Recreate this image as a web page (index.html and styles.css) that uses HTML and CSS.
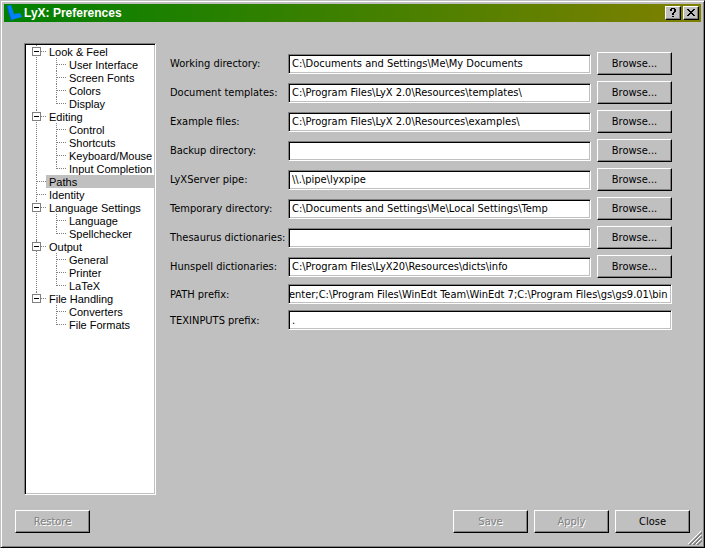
FILE: index.html
```
<!DOCTYPE html>
<html lang="en">
<head>
    <meta charset="UTF-8">
    <meta name="viewport" content="width=device-width, initial-scale=1.0">
    <title>LyX: Preferences</title>
    <link rel="stylesheet" href="styles.css">
</head>
<body>
    <div class="window">
        <header class="title-bar">
            <svg class="logo" width="16" height="16" viewBox="0 0 16 16">
                <path d="M1 1L5 0L8 9L14 8L16 12L5 15Z" fill="#0080ff"/>
                <path d="M1 1L5 15L7 15" fill="none" stroke="#0060c0"/>
            </svg>
            <h1>LyX: Preferences</h1>
            <button type="button" class="title-button" aria-label="Help">
                <svg width="10" height="10" viewBox="0 0 10 10" shape-rendering="crispEdges">
                    <path d="M2 1h2v2h-2zM3 0h4v1h-4zM6 1h2v3h-2zM5 4h2v1h-2zM4 5h2v2h-2zM4 8h2v1h-2z"/>
                </svg>
            </button>
            <button type="button" class="title-button" aria-label="Close window">
                <svg width="10" height="10" viewBox="0 0 10 10" shape-rendering="crispEdges">
                    <path d="M1 1h2v1h-2zM7 1h2v1h-2zM2 2h2v1h-2zM6 2h2v1h-2zM3 3h4v1h-4zM4 4h2v1h-2zM3 5h4v1h-4zM2 6h2v1h-2zM6 6h2v1h-2zM1 7h2v1h-2zM7 7h2v1h-2z"/>
                </svg>
            </button>
        </header>

        <main class="content">
            <!-- Category tree -->
            <nav class="tree-box">
                <ul class="tree">
                    <li>
                        <button type="button" class="toggle" aria-label="Collapse Look &amp; Feel"></button>
                        <span class="item">Look &amp; Feel</span>
                        <ul>
                            <li><span class="item">User Interface</span></li>
                            <li><span class="item">Screen Fonts</span></li>
                            <li><span class="item">Colors</span></li>
                            <li><span class="item">Display</span></li>
                        </ul>
                    </li>
                    <li>
                        <button type="button" class="toggle" aria-label="Collapse Editing"></button>
                        <span class="item">Editing</span>
                        <ul>
                            <li><span class="item">Control</span></li>
                            <li><span class="item">Shortcuts</span></li>
                            <li><span class="item">Keyboard/Mouse</span></li>
                            <li><span class="item">Input Completion</span></li>
                        </ul>
                    </li>
                    <li><span class="item selected">Paths</span></li>
                    <li><span class="item">Identity</span></li>
                    <li>
                        <button type="button" class="toggle" aria-label="Collapse Language Settings"></button>
                        <span class="item">Language Settings</span>
                        <ul>
                            <li><span class="item">Language</span></li>
                            <li><span class="item">Spellchecker</span></li>
                        </ul>
                    </li>
                    <li>
                        <button type="button" class="toggle" aria-label="Collapse Output"></button>
                        <span class="item">Output</span>
                        <ul>
                            <li><span class="item">General</span></li>
                            <li><span class="item">Printer</span></li>
                            <li><span class="item">LaTeX</span></li>
                        </ul>
                    </li>
                    <li>
                        <button type="button" class="toggle" aria-label="Collapse File Handling"></button>
                        <span class="item">File Handling</span>
                        <ul>
                            <li><span class="item">Converters</span></li>
                            <li><span class="item">File Formats</span></li>
                        </ul>
                    </li>
                </ul>
            </nav>

            <!-- Paths page -->
            <form class="paths" id="pathsForm">
                <label for="working-dir">Working directory:</label>
                <input type="text" id="working-dir" value="C:\Documents and Settings\Me\My Documents">
                <button type="button">Browse...</button>

                <label for="templates">Document templates:</label>
                <input type="text" id="templates" value="C:\Program Files\LyX 2.0\Resources\templates\">
                <button type="button">Browse...</button>

                <label for="examples">Example files:</label>
                <input type="text" id="examples" value="C:\Program Files\LyX 2.0\Resources\examples\">
                <button type="button">Browse...</button>

                <label for="backup">Backup directory:</label>
                <input type="text" id="backup">
                <button type="button">Browse...</button>

                <label for="pipe">LyXServer pipe:</label>
                <input type="text" id="pipe" value="\\.\pipe\lyxpipe">
                <button type="button">Browse...</button>

                <label for="temp">Temporary directory:</label>
                <input type="text" id="temp" value="C:\Documents and Settings\Me\Local Settings\Temp">
                <button type="button">Browse...</button>

                <label for="thesaurus">Thesaurus dictionaries:</label>
                <input type="text" id="thesaurus">
                <button type="button">Browse...</button>

                <label for="hunspell">Hunspell dictionaries:</label>
                <input type="text" id="hunspell" value="C:\Program Files\LyX20\Resources\dicts\info">
                <button type="button">Browse...</button>

                <label for="path-prefix">PATH prefix:</label>
                <input type="text" id="path-prefix" class="wide scrolled" value="Center;C:\Program Files\WinEdt Team\WinEdt 7;C:\Program Files\gs\gs9.01\bin">

                <label for="texinputs">TEXINPUTS prefix:</label>
                <input type="text" id="texinputs" class="wide" value=".">
            </form>
        </main>

        <footer class="buttons">
            <button type="button" class="restore" disabled>Restore</button>
            <button type="button" disabled>Save</button>
            <button type="button" disabled>Apply</button>
            <button type="button">Close</button>
        </footer>

        <svg class="grip" width="14" height="14" viewBox="0 0 14 14">
            <path d="M0 13L13 0M4 13L13 4M8 13L13 8" stroke="#ffffff"/>
            <path d="M1 14L14 1M2 14L14 2M5 14L14 5M6 14L14 6M9 14L14 9M10 14L14 10" stroke="#808080"/>
        </svg>
    </div>

    <script>
        const pathPrefix = document.getElementById('path-prefix');
        pathPrefix.scrollLeft = pathPrefix.scrollWidth;
    </script>
</body>
</html>
```
FILE: styles.css
```
:root {
    --face: #c0c0c0;
    --shadow: #808080;
    --dark: #000000;
    --light: #ffffff;
}

* {
    box-sizing: border-box;
}

body {
    margin: 0;
    font-family: "DejaVu Sans Condensed", Tahoma, sans-serif;
    font-size: 11px;
    line-height: 13px;
    color: #000000;
    background: var(--face);
}

.window {
    position: relative;
    display: flex;
    flex-direction: column;
    min-height: 100vh;
    padding: 3px;
    border: 1px solid;
    border-color: var(--face) var(--dark) var(--dark) var(--face);
    box-shadow: inset 1px 1px var(--light), inset -1px -1px var(--shadow);
}

/* Title bar */
.title-bar {
    display: flex;
    align-items: center;
    gap: 2px;
    height: 18px;
    padding: 0 2px;
    background: linear-gradient(to right, #008000, #808000);
}

.logo {
    flex: none;
}

h1 {
    flex: 1;
    margin: 0;
    font-family: "Liberation Sans", Arial, sans-serif;
    font-size: 12px;
    line-height: 16px;
    font-weight: bold;
    color: #ffffff;
}

/* Buttons */
button {
    width: 75px;
    height: 23px;
    padding: 0;
    font: inherit;
    color: #000000;
    background: var(--face);
    border: 1px solid;
    border-color: var(--light) var(--dark) var(--dark) var(--light);
    box-shadow: inset -1px -1px var(--shadow);
}

button:disabled {
    color: var(--shadow);
    text-shadow: 1px 1px var(--light);
}

.title-button {
    display: flex;
    justify-content: center;
    align-items: center;
    width: 16px;
    height: 14px;
}

/* Content */
.content {
    flex: 1;
    display: flex;
    gap: 14px;
    padding: 21px 29px 0 20px;
}

/* Tree */
.tree-box {
    flex: none;
    width: 132px;
    background: #ffffff;
    border: 1px solid;
    border-color: var(--shadow) var(--light) var(--light) var(--shadow);
    box-shadow: inset 1px 1px var(--dark), inset -1px -1px var(--face);
    padding: 1px;
    font-family: "Liberation Sans", Arial, sans-serif;
}

.tree,
.tree ul {
    margin: 0;
    padding: 0;
    list-style: none;
}

.tree li {
    position: relative;
    padding-left: 20px;
}

.item {
    display: block;
    padding: 1px 0 0 3px;
    line-height: 12px;
    white-space: nowrap;
}

.selected {
    background: var(--face);
}

/* Dotted connectors */
.tree li::before {
    content: "";
    position: absolute;
    top: 0;
    bottom: 0;
    left: 10px;
    border-left: 1px dotted var(--shadow);
}

.tree li:last-child::before {
    bottom: auto;
    height: 7px;
}

.tree li::after {
    content: "";
    position: absolute;
    top: 6px;
    left: 10px;
    width: 10px;
    border-top: 1px dotted var(--shadow);
}

.toggle {
    position: absolute;
    z-index: 1;
    top: 2px;
    left: 6px;
    width: 9px;
    height: 9px;
    border: 1px solid var(--shadow);
    box-shadow: none;
    background: linear-gradient(#000000, #000000) center / 5px 1px no-repeat #ffffff;
}

/* Form */
.paths {
    flex: 1;
    display: grid;
    grid-template-columns: 112px 1fr 75px;
    align-content: start;
    align-items: center;
    gap: 6px;
    padding-top: 9px;
}

label {
    white-space: nowrap;
}

input {
    width: 100%;
    min-width: 0;
    height: 20px;
    padding: 0 3px;
    font: inherit;
    color: #000000;
    background: #ffffff;
    border: 1px solid;
    border-color: var(--shadow) var(--light) var(--light) var(--shadow);
    border-radius: 0;
    box-shadow: inset 1px 1px var(--dark), inset -1px -1px var(--face);
    outline: none;
}

.wide {
    grid-column: span 2;
}

.scrolled {
    padding-left: 1px;
    text-align: right;
}

/* Footer */
.buttons {
    display: flex;
    gap: 6px;
    padding: 15px 11px 11px;
}

.restore {
    margin-right: auto;
}

.grip {
    position: absolute;
    right: 2px;
    bottom: 2px;
}
```
